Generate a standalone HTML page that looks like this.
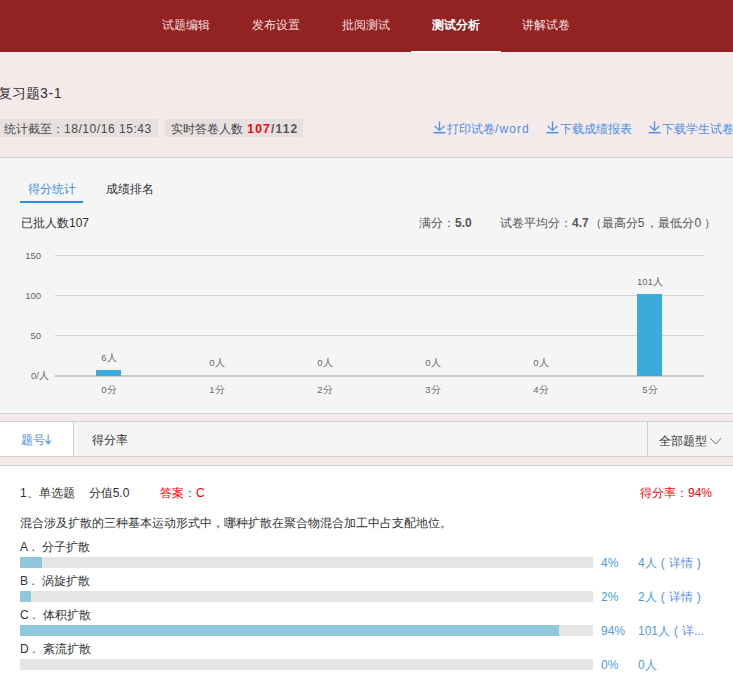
<!DOCTYPE html>
<html><head><meta charset="utf-8">
<style>
*{margin:0;padding:0;box-sizing:border-box}
html,body{width:733px;height:696px;overflow:hidden;background:#fff}
body{font-family:"Liberation Sans",sans-serif;font-size:12px;color:#333;position:relative}
.a{position:absolute;white-space:nowrap;line-height:1}
#hdr{position:absolute;left:0;top:0;width:733px;height:52px;background:#932323}
.nav{position:absolute;top:0;height:52px;width:90px;color:#f3dede;text-align:center;line-height:50px;font-size:12px}
.nav.on{color:#fff;font-weight:600}
#pink{position:absolute;left:0;top:52px;width:733px;height:105px;background:#f5eaea}
.box{position:absolute;white-space:nowrap;top:119px;height:18px;background:#e8e0e0;color:#4a4a4a;line-height:20px;padding:0 5px}
.lnk{position:absolute;top:121px;color:#4a8fe2;line-height:16px;white-space:nowrap}
#gray{position:absolute;left:0;top:157px;width:733px;height:257px;background:#f5f5f5;border-top:1px solid #d3d3d3;border-bottom:1px solid #cfcfcf}
#pink2{position:absolute;left:0;top:414px;width:733px;height:8px;background:#f5eaea}
#tabs{position:absolute;left:0;top:421px;width:733px;height:36px;background:#f5f5f5;border-top:1px solid #cfcfcf;border-bottom:1px solid #cfcfcf}
#pink3{position:absolute;left:0;top:457px;width:733px;height:9px;background:#f5eaea;border-bottom:1px solid #cfcfcf}
.grid{position:absolute;left:55px;width:649px;height:1px;background:#d3d3d3}
.yl{position:absolute;white-space:nowrap;font-size:9.5px;color:#666;text-align:right;width:40px;line-height:10px}
.xl{position:absolute;white-space:nowrap;font-size:9.5px;color:#666;text-align:center;width:60px;line-height:10px}
.bar{position:absolute;background:#3aacdc;width:25px}
.opt{position:absolute;white-space:nowrap;left:20px;color:#333;line-height:12px}
.trk{position:absolute;left:20px;width:573px;height:11px;background:#e5e5e5}
.fill{position:absolute;left:0;top:0;height:11px;background:#8fc8dd}
.pct{position:absolute;white-space:nowrap;left:601px;color:#4aa0d8;line-height:12px}
.cnt{position:absolute;white-space:nowrap;left:638px;color:#4aa0d8;line-height:12px}
</style></head><body>
<div id="hdr">
  <div class="nav" style="left:141px">试题编辑</div>
  <div class="nav" style="left:231px">发布设置</div>
  <div class="nav" style="left:321px">批阅测试</div>
  <div class="nav on" style="left:411px">测试分析</div>
  <div class="nav" style="left:501px">讲解试卷</div>
</div>
<div id="pink">
</div>
<div class="a" style="left:411px;top:51px;width:90px;height:2px;background:#fff"></div>
<div class="a" style="left:-2px;top:86px;font-size:14px;color:#333">复习题<span style="letter-spacing:0.7px">3-1</span></div>
<div class="box" style="left:0;padding-left:4px;width:158px">统计截至：<span style="letter-spacing:0.55px">18/10/16 15:43</span></div>
<div class="box" style="left:165px;width:138px;padding-left:6px">实时答卷人数 <b style="color:#f00;letter-spacing:1.2px;margin-left:1px">107</b><b style="color:#555;letter-spacing:1.2px">/112</b></div>
<div class="lnk" style="left:447px"><svg style="position:absolute;left:-14px;top:-1px" width="13" height="14" viewBox="0 0 13 14"><path d="M6.5 1.2V10.4M1.6 5.9L6.5 10.4L11.4 5.9" fill="none" stroke="#5590e4" stroke-width="1.3"/><path d="M0.5 12.7H12.5" stroke="#5590e4" stroke-width="1.6"/></svg>打印试卷<span style="letter-spacing:1.1px">/word</span></div>
<div class="lnk" style="left:560px"><svg style="position:absolute;left:-14px;top:-1px" width="13" height="14" viewBox="0 0 13 14"><path d="M6.5 1.2V10.4M1.6 5.9L6.5 10.4L11.4 5.9" fill="none" stroke="#5590e4" stroke-width="1.3"/><path d="M0.5 12.7H12.5" stroke="#5590e4" stroke-width="1.6"/></svg>下载成绩报表</div>
<div class="lnk" style="left:662px"><svg style="position:absolute;left:-14px;top:-1px" width="13" height="14" viewBox="0 0 13 14"><path d="M6.5 1.2V10.4M1.6 5.9L6.5 10.4L11.4 5.9" fill="none" stroke="#5590e4" stroke-width="1.3"/><path d="M0.5 12.7H12.5" stroke="#5590e4" stroke-width="1.6"/></svg>下载学生试卷</div>

<div id="gray"></div>
<div class="a" style="left:28px;top:183px;color:#3d8fe0">得分统计</div>
<div class="a" style="left:20px;top:201px;width:63px;height:2px;background:#2d8ae8"></div>
<div class="a" style="left:106px;top:183px;color:#333">成绩排名</div>
<div class="a" style="left:21px;top:217px;color:#333">已批人数107</div>
<div class="a" style="left:419px;top:217px;color:#555">满分：<b>5.0</b></div>
<div class="a" style="left:500px;top:217px;color:#555">试卷平均分：<b>4.7</b><span style="margin-left:1px">（</span>最高分<span style="letter-spacing:1px">5</span><span style="margin-left:1px">，</span>最低分<span style="letter-spacing:1px">0</span><span style="margin-left:2px">）</span></div>

<div class="grid" style="top:255px"></div>
<div class="grid" style="top:295px"></div>
<div class="grid" style="top:335px"></div>
<div class="grid" style="top:375px;height:2px;background:#cbcbcb"></div>
<div class="yl" style="left:1px;top:251px">150</div>
<div class="yl" style="left:1px;top:291px">100</div>
<div class="yl" style="left:1px;top:331px">50</div>
<div class="yl" style="left:9px;top:371px">0/人</div>

<div class="bar" style="left:96px;top:370px;height:6px"></div>
<div class="bar" style="left:637px;top:294px;height:82px"></div>
<div class="xl" style="left:79px;top:353px">6人</div>
<div class="xl" style="left:187px;top:358px">0人</div>
<div class="xl" style="left:295px;top:358px">0人</div>
<div class="xl" style="left:403px;top:358px">0人</div>
<div class="xl" style="left:511px;top:358px">0人</div>
<div class="xl" style="left:620px;top:277px">101人</div>
<div class="xl" style="left:79px;top:385px">0分</div>
<div class="xl" style="left:187px;top:385px">1分</div>
<div class="xl" style="left:295px;top:385px">2分</div>
<div class="xl" style="left:403px;top:385px">3分</div>
<div class="xl" style="left:511px;top:385px">4分</div>
<div class="xl" style="left:620px;top:385px">5分</div>

<div id="pink2"></div>
<div id="tabs">
  <div style="position:absolute;left:0;top:0;width:74px;height:34px;background:#fff;border-right:1px solid #cfcfcf"></div>
  <div style="position:absolute;left:647px;top:0;width:1px;height:34px;background:#cfcfcf"></div>
</div>
<div class="a" style="left:21px;top:434px;color:#4a88ee">题号</div><svg class="a" style="left:44px;top:433px" width="8" height="13" viewBox="0 0 8 13"><path d="M4.2 1.2V10.8" stroke="#8eb3f2" stroke-width="1.6"/><path d="M1.6 7.6L4.2 10.8L6.8 7.6" fill="none" stroke="#6a9af0" stroke-width="1.4"/></svg>
<div class="a" style="left:92px;top:434px;color:#333">得分率</div>
<div class="a" style="left:659px;top:435px;color:#333">全部题型</div>
<svg class="a" style="left:709px;top:437px" width="13" height="9" viewBox="0 0 13 9"><path d="M1.2 1.2 L6.7 7 L12 1.2" fill="none" stroke="#707070" stroke-width="1"/></svg>
<div id="pink3"></div>

<div class="a" style="left:20px;top:487px;color:#333">1、单选题<span style="margin-left:14px">分值5.0</span></div>
<div class="a" style="left:160px;top:487px;color:#f00">答案：C</div>
<div class="a" style="left:640px;top:487px;color:#f00">得分率：94%</div>
<div class="a" style="left:20px;top:517px;color:#333">混合涉及扩散的三种基本运动形式中，哪种扩散在聚合物混合加工中占支配地位。</div>

<div class="opt" style="top:541px">A<span style="margin-left:3.5px">.</span><span style="margin-left:7px">分子扩散</span></div>
<div class="trk" style="top:557px"><div class="fill" style="width:22px"></div></div>
<div class="pct" style="top:557px">4%</div>
<div class="cnt" style="top:557px">4人<span style="color:#5a8fe6"><span style="margin-left:4px">(</span><span style="margin-left:4px">详情</span><span style="margin-left:4px">)</span></span></div>

<div class="opt" style="top:575px">B<span style="margin-left:3.5px">.</span><span style="margin-left:7px">涡旋扩散</span></div>
<div class="trk" style="top:591px"><div class="fill" style="width:11px"></div></div>
<div class="pct" style="top:591px">2%</div>
<div class="cnt" style="top:591px">2人<span style="color:#5a8fe6"><span style="margin-left:4px">(</span><span style="margin-left:4px">详情</span><span style="margin-left:4px">)</span></span></div>

<div class="opt" style="top:609px">C<span style="margin-left:3.5px">.</span><span style="margin-left:7px">体积扩散</span></div>
<div class="trk" style="top:625px"><div class="fill" style="width:539px"></div></div>
<div class="pct" style="top:625px">94%</div>
<div class="cnt" style="top:625px">101人<span style="color:#5a8fe6"><span style="margin-left:4px">(</span><span style="margin-left:4px">详...</span></span></div>

<div class="opt" style="top:643px">D<span style="margin-left:3.5px">.</span><span style="margin-left:7px">紊流扩散</span></div>
<div class="trk" style="top:659px"><div class="fill" style="width:0"></div></div>
<div class="pct" style="top:659px">0%</div>
<div class="cnt" style="top:659px">0人</div>
</body></html>
